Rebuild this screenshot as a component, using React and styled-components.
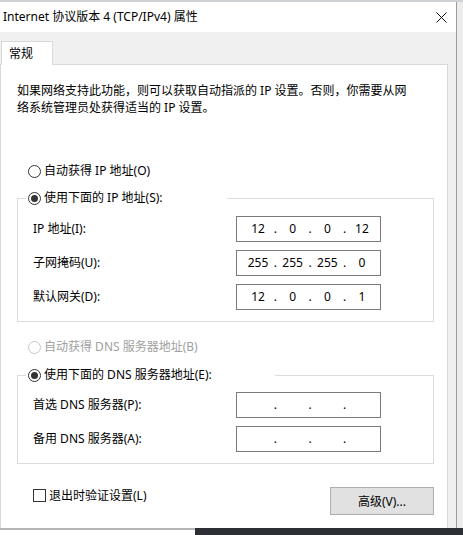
import React from 'react'
import styled, { createGlobalStyle } from 'styled-components'

const GlobalStyle = createGlobalStyle`
  html, body {
    margin: 0;
    padding: 0;
    background: #ededed;
  }
  body {
    font-family: "Noto Sans", "Noto Sans CJK SC", sans-serif;
    font-size: 12px;
    color: #000;
  }
`

const Screen = styled.div`
  width: 463px;
  height: 535px;
  display: flex;
  flex-direction: column;
  overflow: hidden;
`

const TopEdge = styled.div`
  height: 2px;
  flex: none;
  background: #cfd2d5;
`

const Main = styled.div`
  height: 526px;
  flex: none;
  display: flex;
`

const Window = styled.div`
  width: 457px;
  box-sizing: border-box;
  border-right: 1px solid #9c9c9c;
  background: #f0f0f0;
  display: flex;
  flex-direction: column;
  overflow: hidden;
`

const TitleBar = styled.div`
  height: 30px;
  flex: none;
  background: #fff;
  display: flex;
  align-items: center;
  justify-content: space-between;
  padding: 0 9px 0 3px;
  line-height: 16px;
`

const Body = styled.div`
  flex: 1;
  display: flex;
  flex-direction: column;
  padding: 9px 8px 0 0;
  min-height: 0;
`

const TabStrip = styled.div`
  display: flex;
  flex: none;
`

const Tab = styled.div`
  position: relative;
  z-index: 1;
  box-sizing: border-box;
  width: 52px;
  height: 24px;
  margin: 0 0 -1px 1px;
  padding-left: 7px;
  line-height: 23px;
  background: #fff;
  border: 1px solid #d9d9d9;
  border-bottom: none;
`

const Panel = styled.div`
  flex: 1;
  background: #fff;
  border: 1px solid #d9d9d9;
  border-bottom: none;
  padding: 0 13px 0 16px;
  display: flex;
  flex-direction: column;
`

const Intro = styled.p`
  margin: 18px 0 0;
  line-height: 16.5px;
`

const Choice = styled.span`
  display: inline-flex;
  align-items: center;
  gap: 3px;
  height: 16px;
  line-height: 16px;
  color: ${p => (p.$disabled ? '#a0a0a0' : '#000')};
`

const ChoiceRow = styled.div`
  display: flex;
  margin: ${p => p.$top}px 0 0 11px;
`

const Radio = styled.span`
  position: relative;
  box-sizing: border-box;
  width: 13px;
  height: 13px;
  flex: none;
  border-radius: 50%;
  background: #fff;
  border: 1px solid ${p => (p.$disabled ? '#c6c6c6' : '#333')};

  &::after {
    content: '';
    display: ${p => (p.$checked ? 'block' : 'none')};
    position: absolute;
    left: 2px;
    top: 2px;
    width: 7px;
    height: 7px;
    border-radius: 50%;
    background: #333;
  }
`

const Group = styled.fieldset`
  margin: ${p => p.$top}px 0 0;
  padding: 0;
  border: 1px solid #dcdcdc;
  min-width: 0;
`

const GroupLegend = styled.legend`
  box-sizing: border-box;
  width: ${p => p.$width}px;
  margin-left: 8px;
  padding: 0 0 0 2px;
  height: 16px;
  line-height: 16px;
`

const GroupBody = styled.div`
  display: grid;
  grid-template-columns: 203px 145px;
  row-gap: 8px;
  align-items: center;
  padding: ${p => p.$top}px 0 11px 15px;
`

const FieldLabel = styled.span`
  line-height: 16px;
`

const IpBox = styled.div`
  box-sizing: border-box;
  height: 26px;
  border: 1px solid #7a7a7a;
  background: #fff;
  padding-left: 8px;
  display: grid;
  grid-template-columns: 26px 8.67px 26px 8.67px 26px 8.67px 26px;
  align-items: center;
  justify-items: center;
  line-height: 16px;
`

const Footer = styled.div`
  margin-top: 23px;
  display: flex;
  justify-content: space-between;
  align-items: flex-start;
  padding-left: 16px;
`

const CheckLabel = styled.span`
  display: inline-flex;
  align-items: center;
  gap: 3px;
  height: 17px;
  line-height: 17px;
`

const CheckBox = styled.span`
  box-sizing: border-box;
  width: 13px;
  height: 13px;
  border: 1px solid #333;
  background: #fff;
`

const Button = styled.button`
  box-sizing: border-box;
  width: 104px;
  height: 28px;
  padding: 0;
  background: #e1e1e1;
  border: 1px solid #adadad;
  font: inherit;
  color: #000;
  line-height: 16px;
  padding-top: 1px;
`

const Outside = styled.div`
  flex: 1;
  background: #ececec;
`

const Desktop = styled.div`
  flex: 1;
  display: flex;
`

const DeskLeft = styled.div`
  width: 195px;
  background: #fff;
  border-top: 2px solid #b5b5b5;
`

const DeskRight = styled.div`
  flex: 1;
  background: #2c3035;
`

const CloseIcon = () => (
  <svg width="11" height="11" viewBox="0 0 11 11">
    <path d="M0.5 0.5 L10.5 10.5 M10.5 0.5 L0.5 10.5" stroke="#111" strokeWidth="1" fill="none" />
  </svg>
)

const IpField = ({ parts }) => (
  <IpBox>
    {[0, 1, 2, 3].map(i => (
      <React.Fragment key={i}>
        <span>{parts ? parts[i] : ''}</span>
        {i < 3 && <span>.</span>}
      </React.Fragment>
    ))}
  </IpBox>
)

const ipRows = [
  { label: 'IP 地址(I):', parts: ['12', '0', '0', '12'] },
  { label: '子网掩码(U):', parts: ['255', '255', '255', '0'] },
  { label: '默认网关(D):', parts: ['12', '0', '0', '1'] },
]

const dnsRows = [
  { label: '首选 DNS 服务器(P):' },
  { label: '备用 DNS 服务器(A):' },
]

const App = () => (
  <Screen>
    <GlobalStyle />
    <TopEdge />
    <Main>
      <Window>
        <TitleBar>
          <span>Internet 协议版本 4 (TCP/IPv4) 属性</span>
          <CloseIcon />
        </TitleBar>
        <Body>
          <TabStrip>
            <Tab>常规</Tab>
          </TabStrip>
          <Panel>
            <Intro>
              如果网络支持此功能，则可以获取自动指派的 IP 设置。否则，你需要从网
              <br />
              络系统管理员处获得适当的 IP 设置。
            </Intro>

            <ChoiceRow $top={47}>
              <Choice>
                <Radio />
                自动获得 IP 地址(O)
              </Choice>
            </ChoiceRow>

            <Group $top={11}>
              <GroupLegend $width={201}>
                <Choice>
                  <Radio $checked />
                  使用下面的 IP 地址(S):
                </Choice>
              </GroupLegend>
              <GroupBody $top={10}>
                {ipRows.map(row => (
                  <React.Fragment key={row.label}>
                    <FieldLabel>{row.label}</FieldLabel>
                    <IpField parts={row.parts} />
                  </React.Fragment>
                ))}
              </GroupBody>
            </Group>

            <ChoiceRow $top={17}>
              <Choice $disabled>
                <Radio $disabled />
                自动获得 DNS 服务器地址(B)
              </Choice>
            </ChoiceRow>

            <Group $top={12}>
              <GroupLegend $width={249}>
                <Choice>
                  <Radio $checked />
                  使用下面的 DNS 服务器地址(E):
                </Choice>
              </GroupLegend>
              <GroupBody $top={9}>
                {dnsRows.map(row => (
                  <React.Fragment key={row.label}>
                    <FieldLabel>{row.label}</FieldLabel>
                    <IpField />
                  </React.Fragment>
                ))}
              </GroupBody>
            </Group>

            <Footer>
              <CheckLabel>
                <CheckBox />
                退出时验证设置(L)
              </CheckLabel>
              <Button>高级(V)...</Button>
            </Footer>
          </Panel>
        </Body>
      </Window>
      <Outside />
    </Main>
    <Desktop>
      <DeskLeft />
      <DeskRight />
    </Desktop>
  </Screen>
)

export default App
